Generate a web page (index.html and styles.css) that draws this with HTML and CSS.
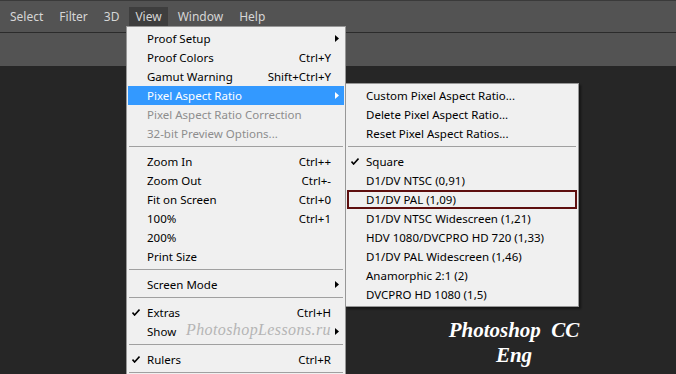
FILE: index.html
```html
<!DOCTYPE html>
<html>
<head>
<meta charset="utf-8">
<link rel="stylesheet" href="styles.css">
</head>
<body>
<div class="app">
  <div class="menubar">
    <span class="mb-item">Select</span>
    <span class="mb-item">Filter</span>
    <span class="mb-item">3D</span>
    <span class="mb-item active">View</span>
    <span class="mb-item">Window</span>
    <span class="mb-item">Help</span>
  </div>
  <div class="options"></div>
  <div class="canvas"></div>

  <div class="menu view-menu">
    <div class="row"><span class="label">Proof Setup</span><svg class="arrow" width="4" height="7" viewBox="0 0 4 7"><path d="M0 0L4 3.5L0 7Z"/></svg></div>
    <div class="row"><span class="label">Proof Colors</span><span class="key">Ctrl+Y</span></div>
    <div class="row"><span class="label">Gamut Warning</span><span class="key">Shift+Ctrl+Y</span></div>
    <div class="row hl"><span class="label">Pixel Aspect Ratio</span><svg class="arrow" width="4" height="7" viewBox="0 0 4 7"><path d="M0 0L4 3.5L0 7Z"/></svg></div>
    <div class="row dis"><span class="label">Pixel Aspect Ratio Correction</span></div>
    <div class="row dis"><span class="label">32-bit Preview Options...</span></div>
    <div class="sep"></div>
    <div class="row"><span class="label">Zoom In</span><span class="key">Ctrl++</span></div>
    <div class="row"><span class="label">Zoom Out</span><span class="key">Ctrl+-</span></div>
    <div class="row"><span class="label">Fit on Screen</span><span class="key">Ctrl+0</span></div>
    <div class="row"><span class="label">100%</span><span class="key">Ctrl+1</span></div>
    <div class="row"><span class="label">200%</span></div>
    <div class="row"><span class="label">Print Size</span></div>
    <div class="sep"></div>
    <div class="row"><span class="label">Screen Mode</span><svg class="arrow" width="4" height="7" viewBox="0 0 4 7"><path d="M0 0L4 3.5L0 7Z"/></svg></div>
    <div class="sep"></div>
    <div class="row"><svg class="check" width="8" height="7" viewBox="0 0 8 7"><path d="M0.5 3.6L2.6 6L7.5 0.6" /></svg><span class="label">Extras</span><span class="key">Ctrl+H</span></div>
    <div class="row"><span class="label">Show</span><svg class="arrow" width="4" height="7" viewBox="0 0 4 7"><path d="M0 0L4 3.5L0 7Z"/></svg></div>
    <div class="sep"></div>
    <div class="row"><svg class="check" width="8" height="7" viewBox="0 0 8 7"><path d="M0.5 3.6L2.6 6L7.5 0.6" /></svg><span class="label">Rulers</span><span class="key">Ctrl+R</span></div>
    <div class="sep"></div>
  </div>

  <div class="menu sub-menu">
    <div class="row"><span class="label">Custom Pixel Aspect Ratio...</span></div>
    <div class="row"><span class="label">Delete Pixel Aspect Ratio...</span></div>
    <div class="row"><span class="label">Reset Pixel Aspect Ratios...</span></div>
    <div class="sep"></div>
    <div class="row"><svg class="check" width="8" height="7" viewBox="0 0 8 7"><path d="M0.5 3.6L2.6 6L7.5 0.6" /></svg><span class="label">Square</span></div>
    <div class="row"><span class="label">D1/DV NTSC (0,91)</span></div>
    <div class="row boxed"><span class="label">D1/DV PAL (1,09)</span></div>
    <div class="row"><span class="label">D1/DV NTSC Widescreen (1,21)</span></div>
    <div class="row"><span class="label">HDV 1080/DVCPRO HD 720 (1,33)</span></div>
    <div class="row"><span class="label">D1/DV PAL Widescreen (1,46)</span></div>
    <div class="row"><span class="label">Anamorphic 2:1 (2)</span></div>
    <div class="row"><span class="label">DVCPRO HD 1080 (1,5)</span></div>
  </div>

  <div class="wm-site">PhotoshopLessons.ru</div>
  <div class="wm-title">Photoshop&nbsp;&nbsp;CC<br>Eng</div>
</div>
</body>
</html>
```

FILE: styles.css
```css
html, body {
  margin: 0;
  padding: 0;
  background: #262626;
}
.app {
  position: relative;
  width: 676px;
  height: 374px;
  overflow: hidden;
  display: flex;
  flex-direction: column;
  font-family: "Noto Sans", "Open Sans", sans-serif;
}
.menubar {
  height: 32px;
  box-sizing: border-box;
  border-top: 1px solid #3a3a3a;
  background: #535353;
  display: flex;
  align-items: flex-end;
  padding-left: 2px;
}
.mb-item {
  height: 25px;
  line-height: 19px;
  padding: 0 8px;
  font-size: 12px;
  color: #d6d6d6;
}
.mb-item.active {
  background: #3e3e3e;
  padding: 0 6px;
  margin: 0 2px;
}
.options {
  height: 33px;
  border-top: 1px solid #2b2b2b;
  background: #535353;
}
.canvas {
  flex: 1;
  background: #262626;
}
.menu {
  position: absolute;
  box-sizing: border-box;
  background: #f0f0f0;
  border: 1px solid #979797;
  padding: 2px 0;
  font-size: 11.5px;
  color: #000;
}
.view-menu {
  left: 126px;
  top: 26px;
  width: 220px;
}
.sub-menu {
  left: 345px;
  top: 83px;
  width: 234px;
  padding-bottom: 2px;
  box-shadow: 2px 2px 2px rgba(0,0,0,0.45);
}
.row {
  position: relative;
  height: 19px;
  margin: 0 1px;
  display: flex;
  align-items: center;
  padding: 0 13px 0 19px;
  white-space: nowrap;
}
.row .label {
  flex: 1;
}
.row .key {
  text-align: right;
}
.row.hl {
  background: #3399ff;
  color: #fff;
}
.row.hl .arrow {
  fill: #fff;
}
.row.dis {
  color: #8d8d8d;
}
.row.boxed {
  box-shadow: inset 0 0 0 2px #5e0f0f;
}
.arrow {
  fill: #000;
  margin-right: -8px;
}
.check {
  position: absolute;
  left: 4px;
  top: 6px;
  fill: none;
  stroke: #000;
  stroke-width: 1.6;
}
.sep {
  height: 9px;
  margin: 0 2px;
  position: relative;
}
.sep::after {
  content: "";
  position: absolute;
  left: 0;
  right: 0;
  top: 3px;
  height: 1px;
  background: #a0a0a0;
}
.wm-site {
  position: absolute;
  left: 186px;
  top: 321px;
  font-family: "Liberation Serif", serif;
  font-style: italic;
  font-size: 16px;
  color: #b5b5b5;
  letter-spacing: 0.4px;
}
.wm-title {
  position: absolute;
  left: 440px;
  top: 318px;
  width: 148px;
  text-align: center;
  font-family: "Liberation Serif", serif;
  font-style: italic;
  font-weight: bold;
  font-size: 21px;
  line-height: 25px;
  color: #ffffff;
}
```
